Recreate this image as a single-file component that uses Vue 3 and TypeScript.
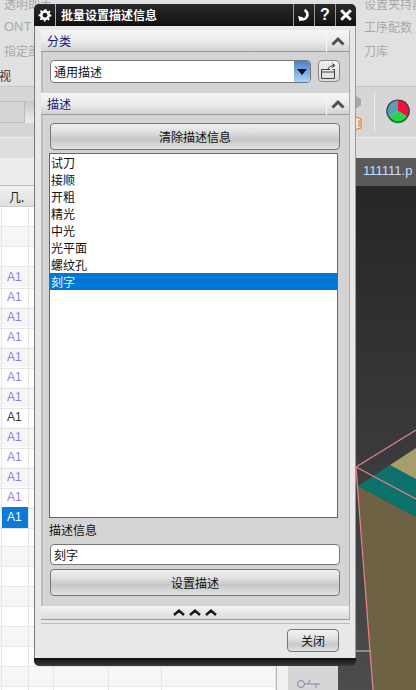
<script setup lang="ts">
interface TableRow { id: number; text: string; tone: string }
const rows: TableRow[] = []
for (let i = 0; i < 25; i++) {
  const isA = i >= 3 && i <= 15
  rows.push({
    id: i,
    text: isA ? 'A1' : '',
    tone: i === 15 ? 'selected' : i === 10 ? 'dark' : '',
  })
}
const items = ['试刀', '接顺', '开粗', '精光', '中光', '光平面', '螺纹孔', '刻字']
</script>

<template>
  <div class="app">
    <header class="ribbon">
      <div class="rib-col">
        <span class="rib-text rib-first">透明即手</span>
        <span class="rib-text rib-ont">ONT</span>
        <span class="rib-text">指定部</span>
        <span class="rib-tab">视</span>
      </div>
      <div class="rib-col rib-right">
        <span class="rib-text rib-first">设置夹持器</span>
        <span class="rib-text">工序配数</span>
        <span class="rib-text">刀库</span>
      </div>
    </header>

    <div class="toolbar">
      <div class="tool-box"></div>
      <div class="tool-drop"></div>
      <div class="tool-space"></div>
      <svg class="cube" width="10" height="38" viewBox="0 0 10 38">
        <path d="M0 2 L7 6 V12 L0 17 Z" fill="#a9a9a9" />
        <path d="M0 23 L7 26 V35 L0 37 Z M2 26 L0 27 M5 27 L5 34" fill="#f1e6dc" stroke="#d9742a" stroke-width="1" />
      </svg>
      <div class="tool-sep"></div>
      <svg class="pie" width="26" height="26" viewBox="0 0 26 26">
        <path d="M13 13 L13 2 A11 11 0 0 1 23 19 Z" fill="#f3123f" />
        <path d="M13 13 L23 19 A11 11 0 0 1 3 19 Z" fill="#21d74c" />
        <path d="M13 13 L3 19 A11 11 0 0 1 13 2 Z" fill="#5a9fb6" />
        <circle cx="13" cy="13" r="11" fill="none" stroke="#444" stroke-width="1.2" />
      </svg>
    </div>

    <div class="tabbar"></div>

    <div class="workspace">
      <section class="table">
        <div class="table-top"></div>
        <div class="table-head">
          <span class="head-cell">几.</span>
        </div>
        <div v-for="r in rows" :key="r.id" class="row" :class="{ alt: r.id % 2 === 1 }">
          <span class="cell cell-gap"></span>
          <span class="cell cell-a" :class="r.tone">{{ r.text }}</span>
          <span class="cell cell-b"></span>
          <span class="cell cell-c"></span>
          <span class="cell cell-d"></span>
          <span class="cell"></span>
        </div>
      </section>
      <div class="splitter"></div>
      <aside class="side">
        <svg class="side-icon" width="26" height="14" viewBox="0 0 26 14">
          <circle cx="5" cy="6" r="3.5" fill="none" stroke="#8080b0" />
          <path d="M9 6 H24 M12 6 L14 2 M20 6 V10" fill="none" stroke="#8080b0" />
        </svg>
      </aside>
      <main class="viewport">
        <svg class="scene" width="78" height="532" viewBox="338 158 78 532">
          <defs>
            <linearGradient id="bg" x1="0" y1="0" x2="0" y2="1">
              <stop offset="0" stop-color="#252628" />
              <stop offset="0.6" stop-color="#3d3d3f" />
              <stop offset="1" stop-color="#4b4c4e" />
            </linearGradient>
          </defs>
          <rect x="338" y="186" width="78" height="504" fill="url(#bg)" />
          <rect x="338" y="158" width="78" height="28" fill="#5a5a5a" />
          <path d="M358 486 L416 517 V690 H373 Z" fill="#6e6244" />
          <path d="M358 486 L390 465 L416 479 V517 Z" fill="#0d716c" />
          <path d="M390 465 L416 448 V479 Z" fill="#a79e6e" />
          <path d="M356 651 H371" stroke="#cfcfcf" stroke-width="1" />
          <path d="M416 430 L356 467 L373 690 M356 467 L416 499" fill="none" stroke="#e87f85" stroke-width="1.3" />
        </svg>
        <span class="tab-title">111111.p</span>
      </main>
    </div>

    <div class="dialog">
      <div class="title-bar">
        <span class="tb-btn tb-gear">
          <svg width="14" height="14" viewBox="0 0 14 14">
            <path d="M7 1 L8.4 1.2 L8.8 2.8 L10.2 3.4 L11.6 2.5 L12.6 3.8 L11.5 5 L11.9 6.3 L13.4 7 L13.2 8.5 L11.6 8.8 L11 10.2 L11.9 11.6 L10.6 12.6 L9.3 11.6 L8 12 L7.3 13.5 H6 L5.6 12 L4.2 11.4 L2.8 12.3 L1.7 11.2 L2.7 9.9 L2.2 8.5 L0.6 8 V6.5 L2.2 6 L2.8 4.6 L1.9 3.2 L3.1 2.1 L4.4 3 L5.8 2.5 Z" fill="#fff" />
            <circle cx="7" cy="7.2" r="2.4" fill="#1b1b1b" />
          </svg>
        </span>
        <span class="tb-title">批量设置描述信息</span>
        <span class="tb-btn tb-small">
          <svg width="14" height="14" viewBox="0 0 14 14">
            <path d="M7.5 2 A4.8 4.8 0 1 1 3.5 11" fill="none" stroke="#fff" stroke-width="2.6" />
            <path d="M1 8 L6.5 9.5 L2.5 13.5 Z" fill="#fff" />
          </svg>
        </span>
        <span class="tb-btn tb-small tb-help">?</span>
        <span class="tb-btn tb-small">
          <svg width="14" height="14" viewBox="0 0 14 14">
            <path d="M2.2 2.2 L11.8 11.8 M11.8 2.2 L2.2 11.8" stroke="#fff" stroke-width="3" />
          </svg>
        </span>
      </div>

      <div class="dlg-body">
        <div class="panel">
          <div class="sec-head">
            <span class="sec-title">分类</span>
            <span class="sec-toggle">
              <svg width="14" height="10" viewBox="0 0 14 10"><path d="M1.5 8.5 L7 3 L12.5 8.5" fill="none" stroke="#4a5053" stroke-width="3" /></svg>
            </span>
          </div>
          <div class="sec-body sec-cat">
            <div class="select">
              <span class="select-text">通用描述</span>
              <span class="select-arrow">
                <svg width="12" height="8" viewBox="0 0 12 8"><path d="M1 1 H11 L6 7 Z" fill="#111" /></svg>
              </span>
            </div>
            <button class="icon-btn" type="button">
              <svg width="18" height="17" viewBox="0 0 18 17">
                <path d="M1.5 6.5 H10 M1.5 6.5 V15.5 H14.5 V6.5 H12.5 M1.5 9 H14.5" fill="none" stroke="#444" stroke-width="1" />
                <path d="M8 6 Q9 2.5 14 2.5 M12 0.5 L15 2.5 L12 4.5" fill="none" stroke="#444" stroke-width="1" />
              </svg>
            </button>
          </div>

          <div class="sec-head sec-second">
            <span class="sec-title">描述</span>
            <span class="sec-toggle">
              <svg width="14" height="10" viewBox="0 0 14 10"><path d="M1.5 8.5 L7 3 L12.5 8.5" fill="none" stroke="#4a5053" stroke-width="3" /></svg>
            </span>
          </div>
          <div class="sec-body sec-desc">
            <button class="push" type="button">清除描述信息</button>
            <ul class="list">
              <li v-for="(it, i) in items" :key="it" class="list-item" :class="{ on: i === items.length - 1 }">{{ it }}</li>
            </ul>
            <label class="field-label">描述信息</label>
            <div class="field">刻字</div>
            <button class="push push-set" type="button">设置描述</button>
          </div>

          <div class="strip">
            <svg width="44" height="9" viewBox="0 0 44 9">
              <path d="M1 7 L6 2.5 L11 7 M17 7 L22 2.5 L27 7 M33 7 L38 2.5 L43 7" fill="none" stroke="#1a1a1a" stroke-width="2.4" />
            </svg>
          </div>
        </div>
        <div class="rule"></div>
        <div class="footer">
          <button class="close-btn" type="button">关闭</button>
        </div>
      </div>
      <div class="dlg-bottom"></div>
    </div>
  </div>
</template>

<style scoped>
.app {
  position: relative;
  width: 416px;
  height: 690px;
  overflow: hidden;
  display: flex;
  flex-direction: column;
  background: #ddd;
  font-family: "Noto Sans CJK SC", "Liberation Sans", sans-serif;
  font-size: 12px;
  color: #111;
}

/* background application */
.ribbon {
  height: 87px;
  flex: none;
  display: flex;
  justify-content: space-between;
  background: #e2e1e1;
  border-bottom: 1px solid #c4c4c4;
  box-sizing: border-box;
}
.rib-col {
  display: flex;
  flex-direction: column;
  padding-left: 4px;
}
.rib-right { width: 52px; padding-left: 0; }
.rib-text {
  height: 24px;
  line-height: 24px;
  color: #a9a9a9;
  white-space: nowrap;
}
.rib-first { margin-top: -8px; height: 23px; }
.rib-ont { font-family: "Liberation Sans", sans-serif; font-size: 13px; }
.rib-tab { margin-left: -5px; margin-top: 4px; color: #333; height: 18px; line-height: 18px; }

.toolbar {
  height: 50px;
  flex: none;
  display: flex;
  align-items: center;
  background: #d6d6d6;
}
.tool-box {
  width: 25px;
  height: 22px;
  margin-top: 0;
  background: #d4d4d4;
  border: 1px solid #bcbcbc;
  border-left: 0;
  box-sizing: border-box;
}
.tool-drop {
  width: 9px;
  height: 22px;
  background: linear-gradient(#c9c9c9, #eee);
}
.tool-space { flex: 1; }
.cube { margin-right: 10px; }
.tool-sep {
  width: 1px;
  height: 40px;
  background: #eee;
  margin-right: 10px;
}
.pie { margin-right: 5px; margin-top: -2px; }

.tabbar {
  height: 21px;
  flex: none;
  background: #dedede;
  border-top: 1px solid #efefef;
  box-sizing: border-box;
}

.workspace {
  flex: 1;
  display: flex;
  min-height: 0;
}
.table {
  width: 276px;
  flex: none;
  background: #fff;
  overflow: hidden;
}
.table-top { height: 28px; background: #ededed; border-bottom: 1px solid #bbb; box-sizing: border-box; }
.table-head {
  height: 21px;
  background: linear-gradient(#f2f2f2, #dfdfdf);
  border-bottom: 1px solid #ccc;
  box-sizing: border-box;
  padding-left: 9px;
  line-height: 21px;
}
.head-cell { color: #222; }
.row {
  display: grid;
  grid-template-columns: 2px 27px 25px 55px 53px 1fr;
  height: 20px;
  background: #fff;
}
.row.alt { background: #f6f6f6; }
.cell {
  border-right: 1px solid #e6e6e6;
  border-bottom: 1px solid #e6e6e6;
  box-sizing: border-box;
  font-family: "Liberation Sans", sans-serif;
  line-height: 21px;
  padding-left: 5px;
  color: #8a80ee;
}
.cell-gap { padding: 0; }
.cell-a.dark { color: #333; }
.cell-a.selected { background: #0a7bd8; color: #fff; }

.splitter {
  width: 12px;
  flex: none;
  background: #f0f0f0;
  border-left: 1px solid #b8b8b8;
  box-sizing: border-box;
}
.side {
  width: 50px;
  flex: none;
  background: #d6d6d6;
  position: relative;
}
.side-icon { position: absolute; left: 8px; bottom: -2px; }
.viewport {
  flex: 1;
  position: relative;
  background: #3a3a3c;
}
.scene { display: block; }
.tab-title {
  position: absolute;
  left: 25px;
  top: 5px;
  color: #c9dfff;
  font-family: "Liberation Sans", sans-serif;
  font-size: 13px;
  white-space: nowrap;
}

/* dialog */
.dialog {
  position: absolute;
  left: 34px;
  top: 4px;
  width: 322px;
  height: 662px;
  display: flex;
  flex-direction: column;
}
.title-bar {
  height: 22px;
  flex: none;
  display: flex;
  align-items: stretch;
  background: linear-gradient(#2a2a2a, #111);
  border-radius: 5px 5px 0 0;
  color: #fff;
}
.tb-btn {
  display: flex;
  align-items: center;
  justify-content: center;
}
.tb-gear { width: 21px; border-right: 1px solid #aaa; box-sizing: content-box; }
.tb-title {
  flex: 1;
  padding-left: 5px;
  font-weight: 700;
  font-size: 12px;
  line-height: 21px;
}
.tb-small { width: 20px; border-left: 1px solid #999; }
.tb-help {
  font-family: "Liberation Sans", sans-serif;
  font-weight: 700;
  font-size: 16px;
}
.dlg-body {
  flex: 1;
  min-height: 0;
  display: flex;
  flex-direction: column;
  background: #e8e8e8;
  border-left: 1px solid #777;
  border-right: 1px solid #999;
  padding: 4px 5px 0 6px;
}
.dlg-bottom {
  height: 8px;
  flex: none;
  background: linear-gradient(#111, #3a3a3a);
  border-radius: 0 0 5px 5px;
}
.panel {
  width: 309px;
  display: flex;
  flex-direction: column;
  background: #d4d4d4;
  border-right: 1px solid #aaa;
  border-bottom: 1px solid #999;
  box-sizing: border-box;
}
.sec-head {
  height: 22px;
  flex: none;
  display: flex;
  align-items: center;
  justify-content: space-between;
  background: linear-gradient(#f5f5f5 0, #ececec 50%, #d2d2d2 100%);
  border-bottom: 1px solid #9a9a9a;
  box-sizing: border-box;
}
.sec-second { margin-top: 1px; }
.sec-title { padding-left: 6px; color: #16167a; }
.sec-toggle {
  width: 23px;
  height: 22px;
  border-left: 1px solid #f5f5f5;
  box-sizing: border-box;
  display: flex;
  align-items: center;
  justify-content: center;
}
.sec-body {
  border-left: 2px solid #bdbdbd;
  box-sizing: border-box;
}
.sec-cat {
  height: 40px;
  display: flex;
  align-items: flex-start;
  padding: 8px 0 0 7px;
}
.select {
  width: 261px;
  height: 23px;
  display: flex;
  border: 1px solid #777;
  border-radius: 4px;
  background: #fff;
  box-sizing: border-box;
  overflow: hidden;
}
.select-text { flex: 1; padding-left: 3px; line-height: 21px; }
.select-arrow {
  width: 16px;
  background: linear-gradient(#4c7fd0, #a9d3f5);
  display: flex;
  align-items: center;
  justify-content: center;
}
.icon-btn {
  width: 22px;
  height: 22px;
  margin-left: 7px;
  padding: 0;
  display: flex;
  align-items: center;
  justify-content: center;
  background: linear-gradient(#f0f0f0, #dcdcdc);
  border: 1px solid #888;
  border-radius: 4px;
}
.sec-desc {
  display: flex;
  flex-direction: column;
  padding: 8px 0 10px 7px;
  height: 491px;
}
.push {
  width: 290px;
  height: 27px;
  flex: none;
  padding: 0;
  font: inherit;
  color: #111;
  border: 1px solid #777;
  border-radius: 4px;
  background: linear-gradient(#f0f0f0 0, #dedede 35%, #c6c6c6 60%, #e2e2e2 100%);
}
.list {
  list-style: none;
  margin: 3px 0 0 -1px;
  padding: 0;
  width: 289px;
  height: 365px;
  flex: none;
  background: #fff;
  border: 1px solid #666;
  box-sizing: border-box;
}
.list-item {
  height: 17px;
  line-height: 17px;
  padding-left: 1px;
  color: #111;
}
.list-item.on { background: #0078d7; color: #e9f4ff; }
.field-label {
  height: 26px;
  line-height: 24px;
  flex: none;
  margin-left: -1px;
}
.field {
  width: 290px;
  height: 21px;
  flex: none;
  background: #fff;
  border: 1px solid #777;
  border-radius: 4px;
  box-sizing: border-box;
  padding-left: 3px;
  line-height: 19px;
}
.push-set { margin-top: 4px; }
.strip {
  height: 13px;
  flex: none;
  display: flex;
  align-items: center;
  justify-content: center;
  background: linear-gradient(#f4f4f4, #dcdcdc);
}
.rule {
  height: 1px;
  flex: none;
  margin-top: 3px;
  background: #bdbdbd;
  width: 309px;
}
.footer {
  flex: 1;
  display: flex;
  justify-content: flex-end;
  align-items: flex-start;
  padding: 5px 11px 0 0;
}
.close-btn {
  width: 52px;
  height: 23px;
  padding: 0;
  font: inherit;
  color: #111;
  border: 1px solid #777;
  border-radius: 4px;
  background: linear-gradient(#f2f2f2 0, #e2e2e2 40%, #c9c9c9 70%, #e4e4e4 100%);
}
</style>
